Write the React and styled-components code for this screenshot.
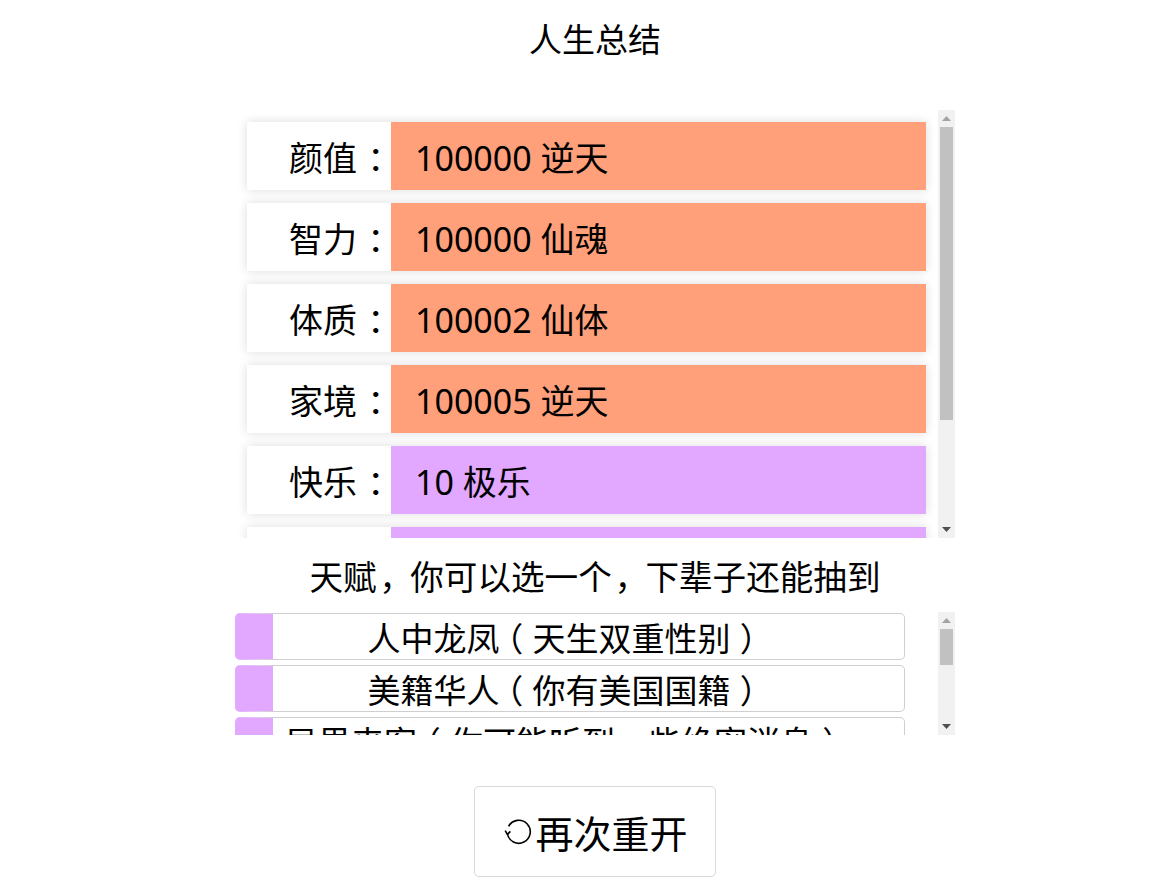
import React from 'react';
import styled, { createGlobalStyle } from 'styled-components';

const GlobalStyle = createGlobalStyle`
  html, body {
    margin: 0;
    padding: 0;
    background: #fff;
  }
  body {
    font-family: "Noto Sans", "Noto Sans CJK SC", sans-serif;
    color: #000;
  }
`;

const Page = styled.div`
  padding: 15px 0 20px 15px;
`;

const Column = styled.div`
  width: 720px;
  margin: 0 auto;
  display: flex;
  flex-direction: column;
  align-items: center;
`;

const Title = styled.div`
  font-size: 33px;
  line-height: 50px;
  margin-bottom: 45px;
`;

// scroll box: the list viewport plus a classic 17px scrollbar next to it
const ScrollBox = styled.div`
  width: 100%;
  height: ${(p) => p.h}px;
  display: flex;
`;

const Viewport = styled.div`
  flex: 1;
  overflow-y: auto;
  scrollbar-width: none;
  &::-webkit-scrollbar {
    display: none;
  }
`;

const Track = styled.div`
  width: 17px;
  flex-shrink: 0;
  background: #f1f1f1;
  display: flex;
  flex-direction: column;
`;

const TrackButton = styled.div`
  height: 17px;
  flex-shrink: 0;
  display: flex;
  align-items: center;
  justify-content: center;
`;

const TrackRail = styled.div`
  flex: 1;
  padding: 0 2px;
`;

const Thumb = styled.div`
  height: ${(p) => p.size}px;
  background: #c1c1c1;
`;

const PropertyList = styled.ul`
  list-style: none;
  margin: 0;
  padding: 12px;
  display: flex;
  flex-direction: column;
  gap: 13px;
`;

const PropertyRow = styled.li`
  display: flex;
  height: 68px;
  flex-shrink: 0;
  background: #fff;
  box-shadow: 0 0 10px rgba(0, 0, 0, 0.14);
  font-size: 34px;
`;

const PropertyLabel = styled.div`
  width: 144px;
  flex-shrink: 0;
  display: flex;
  align-items: center;
  justify-content: flex-end;
  white-space: nowrap;
`;

const gradeColors = {
  2: '#e2a7ff',
  3: '#ffa07a',
};

const PropertyValue = styled.div`
  flex: 1;
  display: flex;
  align-items: center;
  padding-left: 24px;
  background: ${(p) => gradeColors[p.grade]};
  white-space: nowrap;
`;

// full-width punctuation nudged to the centre of its box
const Punct = styled.span`
  display: inline-block;
  transform: translateX(${(p) => p.shift}em);
`;

const SubTitle = styled.div`
  font-size: 33.6px;
  line-height: 50px;
  margin: 14px 0 10px;
`;

const TalentList = styled.ul`
  list-style: none;
  margin: 0;
  padding: 1px 0 0;
  display: flex;
  flex-direction: column;
  gap: 5px;
`;

const TalentItem = styled.li`
  width: 670px;
  height: 47px;
  flex-shrink: 0;
  box-sizing: border-box;
  border: 1px solid #cfcfcf;
  border-left: 38px solid ${(p) => gradeColors[p.grade]};
  border-radius: 5px;
  padding-right: 46px;
  display: flex;
  align-items: center;
  justify-content: center;
  font-size: 33px;
  white-space: nowrap;
`;

const RestartButton = styled.button`
  margin-top: 51px;
  width: 242px;
  height: 91px;
  background: #fff;
  border: 1px solid #d9d9d9;
  border-radius: 5px;
  font-family: inherit;
  font-size: 38px;
  color: #000;
  display: flex;
  align-items: center;
  justify-content: center;
  gap: 3px;
  padding: 0 0 0 2px;
  cursor: pointer;
`;

const shifts = { '：': 0.3, '（': -0.28, '）': 0.28, '，': 0.08 };

function Text({ children }) {
  return Array.from(children).map((ch, i) =>
    shifts[ch] !== undefined ? (
      <Punct key={i} shift={shifts[ch]}>
        {ch}
      </Punct>
    ) : (
      ch
    )
  );
}

function Arrow({ up, color }) {
  return (
    <svg width="9" height="5" viewBox="0 0 9 5">
      <path d={up ? 'M0 5h9L4.5 0z' : 'M0 0h9L4.5 5z'} fill={color} />
    </svg>
  );
}

function Scrollbar({ thumb }) {
  return (
    <Track>
      <TrackButton>
        <Arrow up color="#a3a3a3" />
      </TrackButton>
      <TrackRail>
        <Thumb size={thumb} />
      </TrackRail>
      <TrackButton>
        <Arrow color="#505050" />
      </TrackButton>
    </Track>
  );
}

const properties = [
  { label: '颜值', value: '100000 逆天', grade: 3 },
  { label: '智力', value: '100000 仙魂', grade: 3 },
  { label: '体质', value: '100002 仙体', grade: 3 },
  { label: '家境', value: '100005 逆天', grade: 3 },
  { label: '快乐', value: '10 极乐', grade: 2 },
  { label: '享年', value: '500 仙寿', grade: 2 },
  { label: '总评', value: '400032 传说', grade: 3 },
];

const talents = [
  { name: '人中龙凤（天生双重性别）', grade: 2 },
  { name: '美籍华人（你有美国国籍）', grade: 2 },
  { name: '异界来客（你可能听到一些绝密消息）', grade: 2 },
  { name: '天赋异禀（初始可用属性点+2）', grade: 2 },
  { name: '神秘的小盒子（100岁时才能打开）', grade: 2 },
  { name: '乐天派（快乐+2）', grade: 2 },
];

function RestartIcon() {
  return (
    <svg width="28" height="28" viewBox="0 0 28 28" fill="none" stroke="#000" strokeWidth="1.6">
      <path d="M3.4 15.5 A11.5 11.5 0 1 0 4.6 8.4" />
      <path d="M1.2 12.6 L3.4 16.4 L6.4 13.4" />
    </svg>
  );
}

export default function App() {
  return (
    <Page>
      <GlobalStyle />
      <Column>
        <Title>人生总结</Title>
        <ScrollBox h={428}>
          <Viewport>
            <PropertyList>
              {properties.map((p) => (
                <PropertyRow key={p.label}>
                  <PropertyLabel>
                    <Text>{p.label + '：'}</Text>
                  </PropertyLabel>
                  <PropertyValue grade={p.grade}>{p.value}</PropertyValue>
                </PropertyRow>
              ))}
            </PropertyList>
          </Viewport>
          <Scrollbar thumb={293} />
        </ScrollBox>
        <SubTitle>
          <Text>天赋，你可以选一个，下辈子还能抽到</Text>
        </SubTitle>
        <ScrollBox h={123}>
          <Viewport>
            <TalentList>
              {talents.map((t) => (
                <TalentItem key={t.name} grade={t.grade}>
                  <Text>{t.name}</Text>
                </TalentItem>
              ))}
            </TalentList>
          </Viewport>
          <Scrollbar thumb={36} />
        </ScrollBox>
        <RestartButton>
          <RestartIcon />
          再次重开
        </RestartButton>
      </Column>
    </Page>
  );
}
